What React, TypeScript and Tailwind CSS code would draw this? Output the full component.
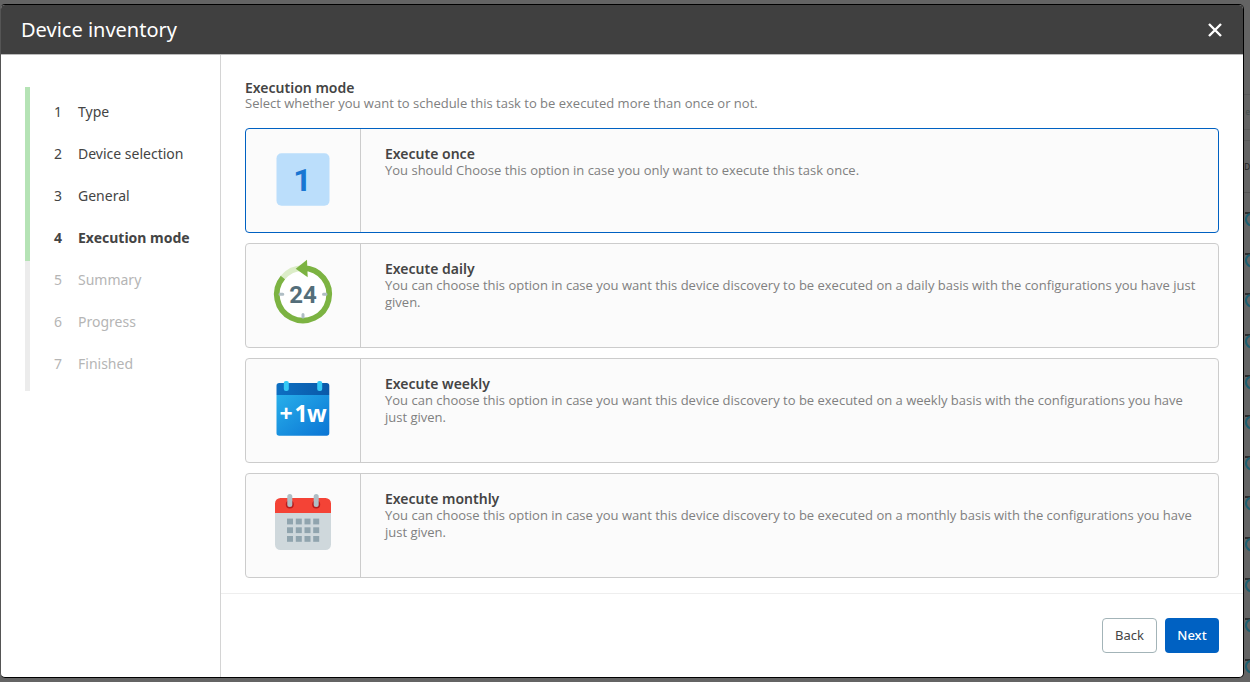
import { useState } from 'react';
import type { ReactNode } from 'react';
import clsx from 'clsx';

type Mode = 'once' | 'daily' | 'weekly' | 'monthly';

const STEPS = ['Type', 'Device selection', 'General', 'Execution mode', 'Summary', 'Progress', 'Finished'];
const CURRENT = 3;

const OnceIcon = () => (
  <svg viewBox="0 0 72 73" className="w-[72px] h-[73px]" aria-hidden="true">
    <rect x="9.5" y="9.2" width="53" height="52.5" rx="5" fill="#bbdefb" />
    <text x="35.5" y="47" textAnchor="middle" fontSize="32" className="font-[Roboto] font-bold" fill="#1976d2">
      1
    </text>
  </svg>
);

const DailyIcon = () => (
  <svg viewBox="0 0 72 73" className="w-[72px] h-[73px]" fill="none" aria-hidden="true">
    <circle cx="36" cy="35.3" r="26" fill="#fff" />
    <path d="M15.9 18.5A26.2 26.2 0 0 1 36 9.1" stroke="#dcedc8" strokeWidth="5.7" />
    <path d="M36 9.1A26.2 26.2 0 1 1 15.9 18.5" stroke="#7cb342" strokeWidth="5.7" />
    <path d="M28.7 9.8L40 0.8L40.7 18.3Z" fill="#7cb342" />
    <path d="M13 35.3H15.8M56.5 35.3H59M36 55.5V58" stroke="#b0bec5" strokeWidth="3" strokeLinecap="round" />
    <text x="36" y="44" textAnchor="middle" fontSize="24" className="font-[Roboto] font-bold" fill="#546e7a">
      24
    </text>
  </svg>
);

const WeeklyIcon = () => (
  <svg viewBox="0 0 72 73" className="w-[72px] h-[73px]" aria-hidden="true">
    <defs>
      <linearGradient id="weekBody" x1="0" y1="0" x2="1" y2="1">
        <stop offset="0" stopColor="#28afea" />
        <stop offset="1" stopColor="#0a74d4" />
      </linearGradient>
      <linearGradient id="weekHead" x1="0" y1="0" x2="1" y2="0">
        <stop offset="0" stopColor="#0d6fc2" />
        <stop offset="1" stopColor="#0a59a8" />
      </linearGradient>
    </defs>
    <path d="M9.5 21H62.3V59a2.7 2.7 0 0 1-2.7 2.7H12.2A2.7 2.7 0 0 1 9.5 59Z" fill="url(#weekBody)" />
    <path d="M9.5 21V11.7A2.7 2.7 0 0 1 12.2 9H59.6a2.7 2.7 0 0 1 2.7 2.7V21Z" fill="url(#weekHead)" />
    <rect x="16.8" y="7" width="5" height="10" rx="2" fill="#35c9f5" />
    <rect x="50.2" y="7" width="5" height="10" rx="2" fill="#35c9f5" />
    <text x="12.5 27.5 40" y="48" fontSize="23" className="font-['Noto_Sans'] font-bold" fill="#fff">
      +1w
    </text>
  </svg>
);

const MonthlyIcon = () => (
  <svg viewBox="0 0 72 73" className="w-[72px] h-[73px]" aria-hidden="true">
    <path d="M8 24H64V55.5a5.5 5.5 0 0 1-5.5 5.5H13.5A5.5 5.5 0 0 1 8 55.5Z" fill="#cfd8dc" />
    <path d="M8 24V14.5A5.5 5.5 0 0 1 13.5 9H58.5A5.5 5.5 0 0 1 64 14.5V24Z" fill="#f44336" />
    <circle cx="22.8" cy="15.5" r="4" fill="#b71c1c" />
    <circle cx="49.2" cy="15.5" r="4" fill="#b71c1c" />
    <rect x="20.3" y="5" width="5" height="13" rx="2.5" fill="#b0bec5" />
    <rect x="46.7" y="5" width="5" height="13" rx="2.5" fill="#b0bec5" />
    {[29.6, 38.3, 47].map((y) =>
      [20, 28.8, 37.5, 46.2].map((x) => <rect key={`${x}-${y}`} x={x} y={y} width="6" height="5.8" fill="#90a4ae" />)
    )}
  </svg>
);

const OPTIONS: { id: Mode; title: string; text: string; icon: ReactNode }[] = [
  {
    id: 'once',
    title: 'Execute once',
    text: 'You should Choose this option in case you only want to execute this task once.',
    icon: <OnceIcon />,
  },
  {
    id: 'daily',
    title: 'Execute daily',
    text: 'You can choose this option in case you want this device discovery to be executed on a daily basis with the configurations you have just given.',
    icon: <DailyIcon />,
  },
  {
    id: 'weekly',
    title: 'Execute weekly',
    text: 'You can choose this option in case you want this device discovery to be executed on a weekly basis with the configurations you have just given.',
    icon: <WeeklyIcon />,
  },
  {
    id: 'monthly',
    title: 'Execute monthly',
    text: 'You can choose this option in case you want this device discovery to be executed on a monthly basis with the configurations you have just given.',
    icon: <MonthlyIcon />,
  },
];

// Edge of the dimmed device table behind the dialog
const TableEdge = () => (
  <div className="flex w-[6px] shrink-0 flex-col pb-1 text-[8px]" aria-hidden="true">
    <div className="h-[91px] border-b border-[#5a5a5a]" />
    <div className="flex h-[35px] items-center justify-end border-b border-[#5a5a5a] text-[#44504e]">e</div>
    <div className="h-[11px] border-b border-[#5a5a5a]" />
    <div className="mb-[19px] flex h-[52px] items-center justify-end border-b border-[#555] text-[#222]">D</div>
    <div className="flex flex-1 flex-col justify-between">
      {Array.from({ length: 12 }, (_, i) => (
        <svg key={i} viewBox="0 0 6 15" className="block w-[6px] h-[15px]" fill="none">
          <path d="M1 1H6" stroke="#2e2e2e" strokeWidth="2" />
          <path d="M6 2C3.5 3 2 5 2 7.5S3.5 12 6 13.5" stroke="#1c5f70" strokeWidth="2" />
        </svg>
      ))}
    </div>
  </div>
);

export default function App() {
  const [mode, setMode] = useState<Mode>('once');

  return (
    <div className="flex h-screen overflow-hidden bg-[#646464] py-1 font-['Noto_Sans',sans-serif] text-[#444]">
      {/* Dialog */}
      <div
        role="dialog"
        aria-labelledby="dialog-title"
        className="flex flex-1 min-w-0 flex-col overflow-hidden rounded-[5px] border border-black border-l-[#555] bg-white"
      >
        <header className="flex h-[50px] shrink-0 items-center justify-between border-b border-[#bbb] bg-[#404040] px-5 text-white">
          <h1 id="dialog-title" className="text-xl">
            Device inventory
          </h1>
          <button type="button" aria-label="Close">
            <svg viewBox="0 0 16 16" className="w-4 h-4" fill="none" stroke="currentColor" strokeWidth="2.4">
              <path d="M2 2L14 14M14 2L2 14" />
            </svg>
          </button>
        </header>

        <div className="flex flex-1 min-h-0">
          {/* Wizard steps */}
          <nav className="w-[220px] shrink-0 border-r border-[#d4d4d4] px-6 py-8">
            <div className="flex">
              <div className="flex w-[5px] flex-col bg-[#ececec]">
                <div className="bg-[#b5e3b5]" style={{ height: `${((CURRENT + 1) / STEPS.length) * 100}%` }} />
              </div>
              <ol className="pt-1 pb-[6px] pl-6 text-sm">
                {STEPS.map((step, i) => (
                  <li
                    key={step}
                    aria-current={i === CURRENT ? 'step' : undefined}
                    className={clsx(
                      'flex h-[42px] items-center',
                      i === CURRENT && 'font-bold',
                      i > CURRENT && 'text-[#b5b5b5]'
                    )}
                  >
                    <span className="w-6">{i + 1}</span>
                    <span>{step}</span>
                  </li>
                ))}
              </ol>
            </div>
          </nav>

          {/* Step content */}
          <div className="flex flex-1 min-w-0 flex-col">
            <main className="flex-1 px-6 pt-6">
              <h2 id="mode-title" className="text-sm leading-[17px] font-semibold">
                Execution mode
              </h2>
              <p className="font-['Open_Sans',sans-serif] text-[13px] leading-[15px] text-[#808080]">
                Select whether you want to schedule this task to be executed more than once or not.
              </p>
              <div role="radiogroup" aria-labelledby="mode-title" className="mt-[17px] flex flex-col gap-[10px]">
                {OPTIONS.map((o) => (
                  <label
                    key={o.id}
                    className={clsx(
                      'relative flex min-h-[105px] cursor-pointer overflow-hidden rounded border bg-[#fbfbfb]',
                      mode === o.id ? 'border-[#0061c2]' : 'border-[#ccc]'
                    )}
                  >
                    <input
                      type="radio"
                      name="mode"
                      className="sr-only"
                      checked={mode === o.id}
                      onChange={() => setMode(o.id)}
                    />
                    <span className="flex w-[115px] shrink-0 items-center justify-center border-r border-[#ccc]">
                      {o.icon}
                    </span>
                    <span className="flex-1 py-4 pr-4 pl-6">
                      <span className="block text-sm leading-[17px] font-semibold">{o.title}</span>
                      <span className="block font-['Open_Sans',sans-serif] text-[13px] leading-[17px] text-[#808080]">
                        {o.text}
                      </span>
                    </span>
                  </label>
                ))}
              </div>
            </main>

            <footer className="flex justify-end gap-2 border-t border-[#eee] p-6 text-[13px]">
              <button type="button" className="h-[35px] rounded border border-[#a3b4b8] bg-white px-3">
                Back
              </button>
              <button type="button" className="h-[35px] min-w-[54px] rounded bg-[#0061c2] px-3 font-medium text-white">
                Next
              </button>
            </footer>
          </div>
        </div>
      </div>

      <TableEdge />
    </div>
  );
}
